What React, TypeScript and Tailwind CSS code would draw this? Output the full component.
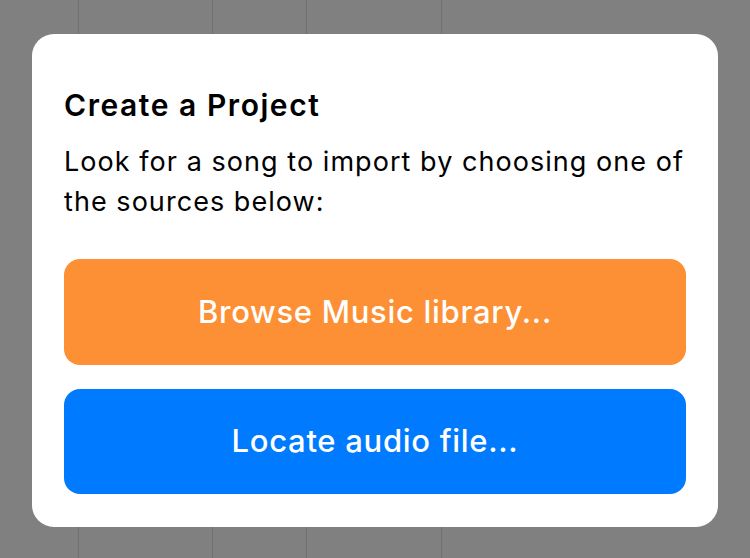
export default function App() {
  const cols = [79, 134, 94, 135];

  return (
    <div className="relative w-[750px] h-[558px] overflow-hidden bg-[#808080]" style={{ fontFamily: "Inter, 'Noto Sans', sans-serif" }}>
      {/* dimmed content behind the sheet */}
      <div className="flex h-full">
        {cols.map((w, i) => (
          <div key={i} className="h-full border-r border-[#707070]" style={{ width: w }} />
        ))}
        <div className="flex-1" />
      </div>

      {/* dialog */}
      <div className="absolute left-[32px] top-[34px] w-[686px] h-[493px] rounded-[22px] bg-white pl-8 pr-4 pt-[53px]">
        <h1 className="text-[30px] leading-[36px] font-semibold text-black tracking-[1.55px]">Create a Project</h1>
        <p className="mt-[19px] text-[27px] leading-[40px] text-black tracking-[1.05px]">
          Look for a song to import by choosing one of the sources below:
        </p>
        <div className="mt-[37px] mr-4 flex flex-col gap-6">
          <button className="h-[106px] w-full rounded-[16px] bg-[#FD8F34] text-white text-[31px] font-medium tracking-[0.7px]">
            Browse Music library...
          </button>
          <button className="h-[105px] w-full rounded-[16px] bg-[#007AFF] text-white text-[31px] font-medium tracking-[0.7px]">
            Locate audio file...
          </button>
        </div>
      </div>
    </div>
  );
}
